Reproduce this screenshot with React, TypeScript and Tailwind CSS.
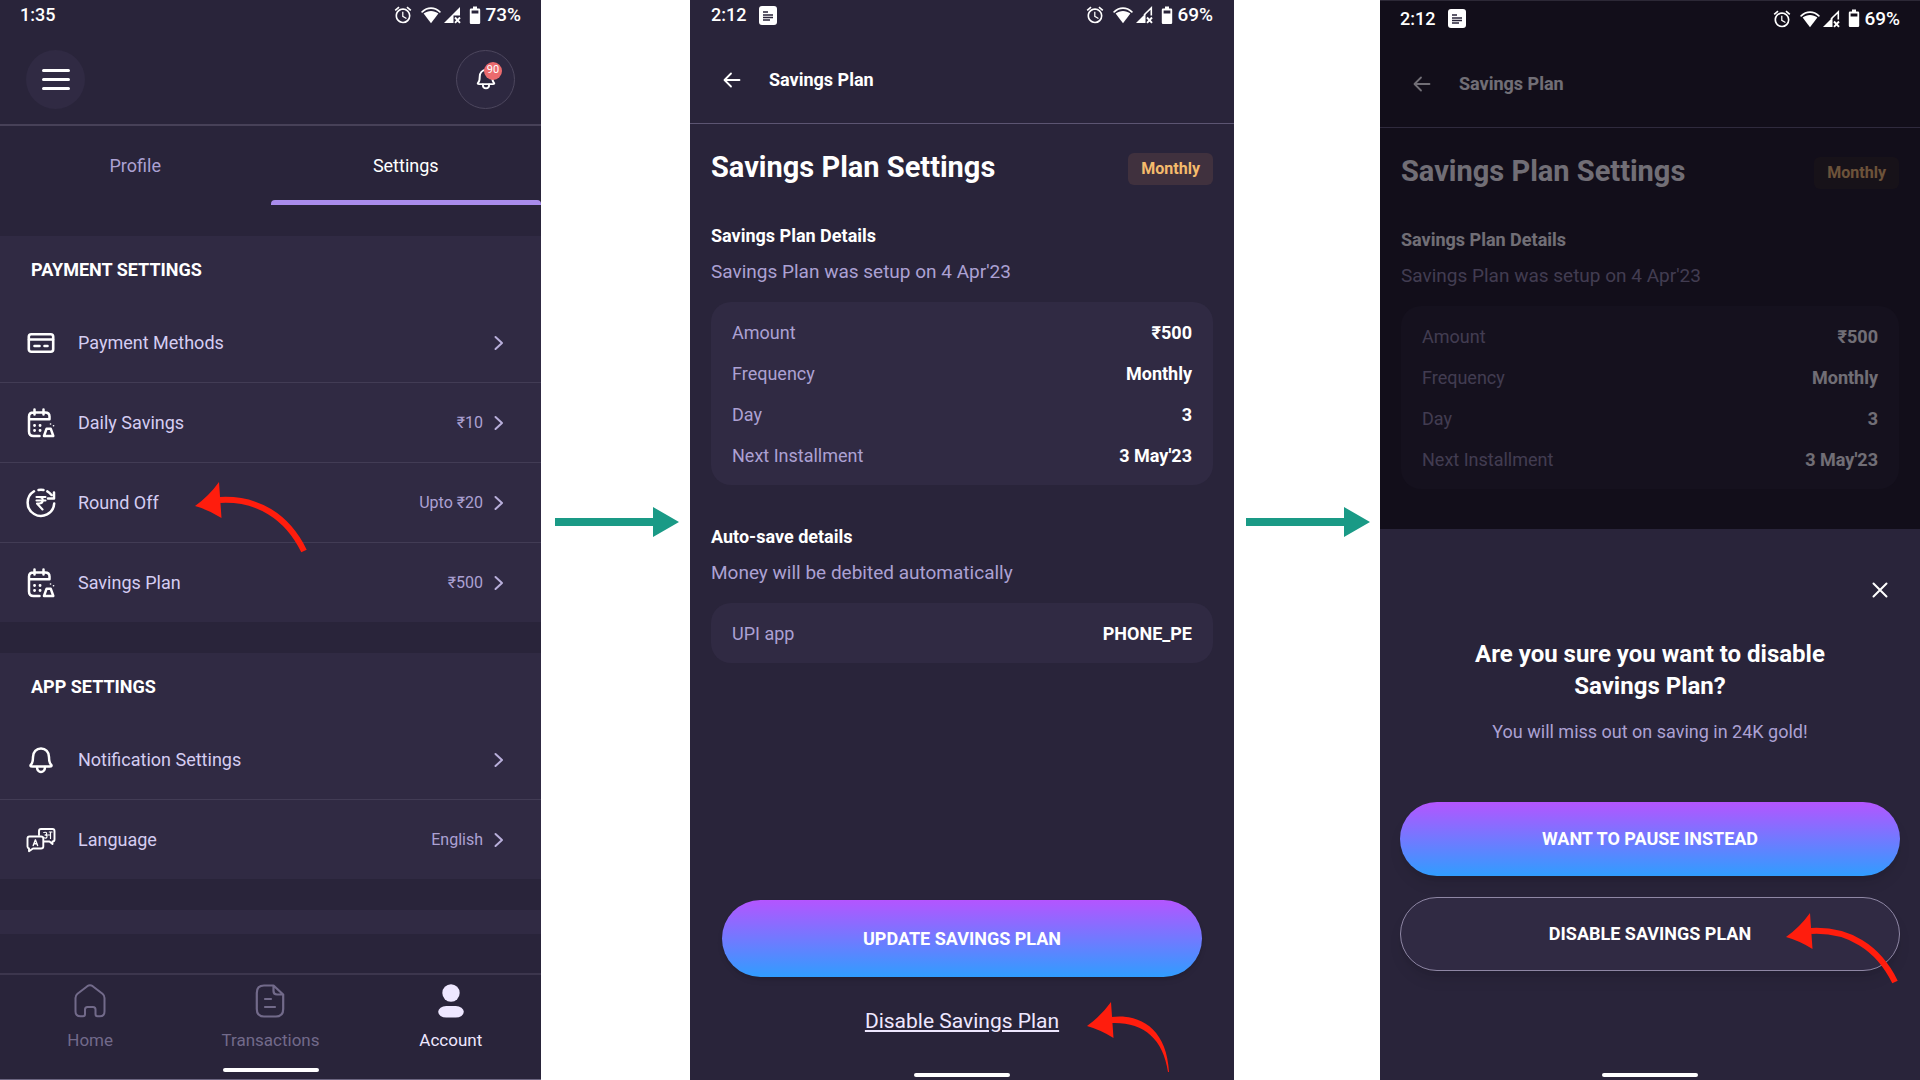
import React from "react";

type IconProps = { className?: string };

const stroke = {
  fill: "none",
  stroke: "currentColor",
  strokeLinecap: "round" as const,
  strokeLinejoin: "round" as const,
};

function AlarmIcon() {
  return (
    <svg viewBox="0 0 24 24" className="size-5" fill="currentColor" aria-hidden="true">
      <path d="M22 5.72l-4.6-3.86-1.29 1.53 4.6 3.86L22 5.72zM7.88 3.39L6.6 1.86 2 5.71l1.29 1.53 4.59-3.85zM12.5 8H11v6l4.75 2.85.75-1.23-4-2.37V8zM12 4c-4.97 0-9 4.03-9 9s4.02 9 9 9a9 9 0 0 0 0-18zm0 16c-3.87 0-7-3.13-7-7s3.13-7 7-7 7 3.13 7 7-3.13 7-7 7z" />
    </svg>
  );
}

function WifiIcon() {
  return (
    <svg viewBox="0 0 20 18" className="h-[18px] w-5" aria-hidden="true">
      <path d="M1.200 5.800C6.400 0.800 13.600 0.800 18.800 5.800" fill="none" stroke="currentColor" strokeWidth="1.800" strokeLinecap="round" />
      <path d="M2.600 7.600C7 4.200 13 4.200 17.400 7.600L10 17.200Z" fill="currentColor" />
    </svg>
  );
}

function SignalIcon({ full }: { full?: boolean }) {
  return (
    <svg viewBox="0 0 18 18" className="size-[18px]" aria-hidden="true">
      {full ? (
        <path d="M17 1V9.500H10.500V17H1Z" fill="currentColor" />
      ) : (
        <>
          <path d="M10.500 7.500V17H1Z" fill="currentColor" />
          <path d="M9 9L16.300 2V9.500" fill="none" stroke="currentColor" strokeWidth="1.600" />
        </>
      )}
      <path d="M12 11.500L17 16.800M17 11.500L12 16.800" stroke="currentColor" strokeWidth="1.900" />
    </svg>
  );
}

function BatteryIcon() {
  return (
    <svg viewBox="0 0 12 19" className="h-[19px] w-3" aria-hidden="true">
      <path fillRule="evenodd" d="M4 0.500H8V2.500H10Q11.200 2.500 11.200 3.700V16.800Q11.200 18 10 18H2Q0.800 18 0.800 16.800V3.700Q0.800 2.500 2 2.500H4ZM2.600 4.500V7.500H9.400V4.500Z" fill="currentColor" />
    </svg>
  );
}

function NoteIcon() {
  return (
    <svg viewBox="0 0 18 19" className="h-[19px] w-[18px]" aria-hidden="true">
      <rect width="18" height="19" rx="3" fill="#fff" />
      <path d="M4 6H9M4 9H14M4 11.500H14M4 14H11" stroke="#29243a" strokeWidth="1.300" />
    </svg>
  );
}

function StatusBar({ time, battery, note, fullSignal, className }: { time: string; battery: string; note?: boolean; fullSignal?: boolean; className: string }) {
  return (
    <div className={`flex items-center justify-between text-lg leading-5 font-medium text-white ${className}`}>
      <div className="flex items-center gap-[13px]">
        <span>{time}</span>
        {note && <NoteIcon />}
      </div>
      <div className="flex items-center">
        <AlarmIcon />
        <span className="ml-2 flex items-center gap-[2px]">
          <WifiIcon />
          <SignalIcon full={fullSignal} />
        </span>
        <span className="ml-2 flex items-center gap-1">
          <BatteryIcon />
          <span className="text-[19px] leading-5">{battery}</span>
        </span>
      </div>
    </div>
  );
}

function BellIcon({ className }: IconProps) {
  return (
    <svg viewBox="0 0 28 28" className={className} {...stroke} strokeWidth="2.500" aria-hidden="true">
      <path d="M5.500 20.500C3.200 20.500 3 19.500 4.200 18.300C5.800 16.700 6 14.500 6 11C6 6 9.300 2.500 14 2.500S22 6 22 11C22 14.500 22.200 16.700 23.800 18.300C25 19.500 24.800 20.500 22.500 20.500Z" />
      <path d="M10 21C10 27.500 18 27.500 18 21" />
    </svg>
  );
}

function CardIcon() {
  return (
    <svg viewBox="0 0 28 28" className="size-7" {...stroke} strokeWidth="2.600" aria-hidden="true">
      <rect x="1.800" y="5.200" width="24.400" height="17.600" rx="2.500" />
      <path d="M2 10.500H26M7.500 17H12.500M17.500 17H20.500" />
    </svg>
  );
}

function CalendarIcon() {
  return (
    <svg viewBox="0 0 28 30" className="h-[30px] w-7" {...stroke} strokeWidth="2.500" aria-hidden="true">
      <path d="M12.500 28H6.500Q2 28 2 23.500V8.500Q2 4.500 6.500 4.500H18Q22.500 4.500 22.500 8.500V11.300H2M7.500 1.500V6.500M16.500 1.500V6.500" />
      <path d="M7.500 17.500H7.600M13 17.500H13.100M7.500 22.500H7.600M13 22.500H13.100" strokeWidth="2.800" />
      <path d="M19.500 20.800H23.800L26.300 28H17Z" />
      <path d="M23.500 16H23.600M26.500 17.800H26.600" strokeWidth="1.600" />
    </svg>
  );
}

function RoundOffIcon() {
  return (
    <svg viewBox="0 0 30 30" className="h-[30px] w-[30px]" {...stroke} strokeWidth="2.500" aria-hidden="true">
      <path d="M8 3.300A13.300 13.300 0 1 0 28.200 15.500" />
      <path d="M12.500 1.900Q15 1.400 17.500 1.900M21.300 3.400Q23.500 4.600 25.500 7M28 4.500V10.500H22" />
      <path d="M10.500 9H19.500M10.500 12.500H19.500M10.500 9H13Q16.800 9 16.800 12.300Q16.800 15.500 13 15.500H11L16.500 21.500" strokeWidth="2.100" />
    </svg>
  );
}

function LanguageIcon() {
  return (
    <svg viewBox="0 0 30 26" className="h-[26px] w-[30px]" {...stroke} strokeWidth="1.900" aria-hidden="true">
      <path d="M13 8V4Q13 2 15 2H26.500Q28.500 2 28.500 4V12.500Q28.500 14.500 26.500 14.500V17L23.500 14.500H18" />
      <path d="M3.500 9.500H15Q17.300 9.500 17.300 11.500V19.500Q17.300 21.500 15 21.500H7L3 24.300V21.500Q1.500 21 1.500 19.500V11.500Q1.500 9.500 3.500 9.500Z" />
      <path d="M7.200 18.500L9.400 12.800L11.600 18.500M8 16.700H10.800" strokeWidth="1.400" />
      <path d="M17.800 5.500Q21 4.700 20.600 6.800Q20.300 8 19 8Q21.300 8.200 20.900 10Q20.300 11.800 18 10.700M21 8H24.500M23.300 5H26M24.500 5V11.500" strokeWidth="1.200" />
    </svg>
  );
}

function ChevronIcon() {
  return (
    <svg viewBox="0 0 10 16" className="h-4 w-[10px] text-[#b9afdb]" {...stroke} strokeWidth="2" aria-hidden="true">
      <path d="M1.500 2L8 8L1.500 14" />
    </svg>
  );
}

function HomeIcon() {
  return (
    <svg viewBox="0 0 32 34" className="h-[34px] w-8" {...stroke} strokeWidth="2" aria-hidden="true">
      <path d="M13.300 2.200Q16 0.500 18.700 2.200L28.500 9.800Q30.500 11.500 30.500 14V27.500Q30.500 32.300 26 32.300H23.500Q21.500 32.300 21.500 30V25.500Q21.500 23 19 23H13.500Q11 23 11 25.500V30Q11 32.300 9 32.300H6.500Q1.500 32.300 1.500 27.500V14Q1.500 11.500 3.500 9.800Z" />
    </svg>
  );
}

function TransactionsIcon() {
  return (
    <svg viewBox="0 0 30 34" className="h-[34px] w-[30px]" {...stroke} strokeWidth="2.200" aria-hidden="true">
      <path d="M18.500 1.500H9Q1.800 1.500 1.800 9V25Q1.800 32.500 9 32.500H21Q28.200 32.500 28.200 25V10.500ZM18.500 1.500V7Q18.500 10.500 22 10.500H28.200M10 15H16M10 23H20" />
    </svg>
  );
}

function AccountIcon() {
  return (
    <svg viewBox="0 0 30 34" className="h-[34px] w-[30px]" fill="currentColor" aria-hidden="true">
      <ellipse cx="15" cy="9" rx="8.700" ry="8.800" />
      <rect x="2.200" y="22" width="25.600" height="11.600" rx="8" ry="5.800" />
    </svg>
  );
}

function BackIcon() {
  return (
    <svg viewBox="0 0 18 16" className="h-4 w-[18px]" {...stroke} strokeWidth="1.800" aria-hidden="true">
      <path d="M16.500 8H2M8 1.500L1.500 8L8 14.500" />
    </svg>
  );
}

function RedArrow({ tapered, className }: { tapered?: boolean; className: string }) {
  return (
    <svg viewBox="0 0 112 72" className={`pointer-events-none absolute h-[72px] w-28 ${className}`} fill="#ff1d0d" aria-hidden="true">
      <path d="M0 24Q14 14 24 0L26.500 36Q14 28 0 24Z" />
      {tapered ? (
        <path d="M24 15C52 11 80 26 82 70L81 70C76 36 56 20 25 21Z" />
      ) : (
        <path d="M25 18C62 16 92 34 109 69" fill="none" stroke="#ff1d0d" strokeWidth="6" />
      )}
    </svg>
  );
}

function StepArrow() {
  return (
    <div className="flex flex-col items-center justify-center pb-9 pl-[2px]">
      <svg viewBox="0 0 124 30" className="h-[30px] w-[124px]" fill="#1a9a86" aria-hidden="true">
        <path d="M0 11H98V0L124 15L98 30V19H0Z" />
      </svg>
    </div>
  );
}

function HomeBar() {
  return <div className="mx-auto h-1 w-24 rounded-full bg-white" />;
}

function SettingRow({ icon, label, value }: { icon: React.ReactNode; label: string; value?: string }) {
  return (
    <li className="border-b border-[#423c55] last:border-b-0">
      <button type="button" className="flex h-[79px] w-full items-center pr-[37px] pl-[26px] text-left">
        <span className="flex w-[30px] justify-center text-white">{icon}</span>
        <span className="ml-[22px] flex-1 text-lg text-[#d5cdf2]">{label}</span>
        {value && <span className="mr-[11px] text-base text-[#aca1d3]">{value}</span>}
        <ChevronIcon />
      </button>
    </li>
  );
}

function SettingSection({ title, children }: { title: string; children: React.ReactNode }) {
  return (
    <section className="bg-[#302a43]">
      <h2 className="flex h-[67px] items-center px-[31px] text-lg font-bold text-white">{title}</h2>
      <ul>{children}</ul>
    </section>
  );
}

function NavItem({ icon, label, active }: { icon: React.ReactNode; label: string; active?: boolean }) {
  return (
    <a href="#" className={`flex flex-col items-center gap-[10px] text-[17px] leading-6 ${active ? "text-[#eee7ff]" : "text-[#726a8a]"}`}>
      {icon}
      <span>{label}</span>
    </a>
  );
}

function AccountScreen() {
  return (
    <main className="relative flex min-w-0 flex-col border-b border-[#6b6580] bg-[#29243a]">
      <StatusBar time="1:35" battery="73%" fullSignal className="h-8 px-5 pb-[2px]" />
      <header className="flex h-[94px] items-center justify-between border-b-2 border-[#474158] px-[26px] pt-[2px]">
        <button type="button" aria-label="Menu" className="flex size-[59px] items-center justify-center rounded-full bg-[#302a43]">
          <span className="flex flex-col gap-[6px]">
            <span className="h-[3px] w-7 rounded-full bg-white" />
            <span className="h-[3px] w-7 rounded-full bg-white" />
            <span className="h-[3px] w-7 rounded-full bg-white" />
          </span>
        </button>
        <button type="button" aria-label="Notifications" className="relative flex size-[59px] items-center justify-center rounded-full border border-[#4d475e] bg-[#2d2840] text-white">
          <BellIcon className="size-[22px]" />
          <span className="absolute top-[11px] right-3 flex size-[18px] items-center justify-center rounded-full bg-[#eb6b6e] text-[11px] text-white">90</span>
        </button>
      </header>
      <nav className="grid h-[79px] grid-cols-2 text-lg" aria-label="Account sections">
        <a href="#" className="flex items-center justify-center text-[#aca1d3]">Profile</a>
        <a href="#" className="relative flex items-center justify-center text-white">
          Settings
          <span className="absolute inset-x-0 bottom-0 h-[5px] rounded-t bg-[#a98cec]" />
        </a>
      </nav>
      <div className="flex flex-col gap-[31px] pt-[31px]">
        <SettingSection title="PAYMENT SETTINGS">
          <SettingRow icon={<CardIcon />} label="Payment Methods" />
          <SettingRow icon={<CalendarIcon />} label="Daily Savings" value="₹10" />
          <SettingRow icon={<RoundOffIcon />} label="Round Off" value="Upto ₹20" />
          <SettingRow icon={<CalendarIcon />} label="Savings Plan" value="₹500" />
        </SettingSection>
        <SettingSection title="APP SETTINGS">
          <SettingRow icon={<BellIcon className="size-7" />} label="Notification Settings" />
          <SettingRow icon={<LanguageIcon />} label="Language" value="English" />
        </SettingSection>
        <div className="h-6 bg-[#302a43]" />
      </div>
      <footer className="mt-auto border-t-2 border-[#3c364d] pb-[7px]">
        <nav className="grid grid-cols-3 pt-[9px]" aria-label="Main">
          <NavItem icon={<HomeIcon />} label="Home" />
          <NavItem icon={<TransactionsIcon />} label="Transactions" />
          <NavItem icon={<AccountIcon />} label="Account" active />
        </nav>
        <div className="pt-4">
          <HomeBar />
        </div>
      </footer>
      <RedArrow className="top-[482px] left-[195px]" />
    </main>
  );
}

const planDetails = [
  ["Amount", "₹500"],
  ["Frequency", "Monthly"],
  ["Day", "3"],
  ["Next Installment", "3 May'23"],
];

function DetailCard({ rows, dimmed }: { rows: string[][]; dimmed?: boolean }) {
  return (
    <dl className={`mt-4 rounded-[20px] px-[21px] pt-[10px] pb-[9px] ${dimmed ? "bg-[#1a1624]" : "bg-[#302a43]"}`}>
      {rows.map(([name, value]) => (
        <div key={name} className="flex h-[41px] items-center justify-between text-lg">
          <dt className={dimmed ? "text-[#8a82a4]" : "text-[#aca1d3]"}>{name}</dt>
          <dd className="font-bold text-white">{value}</dd>
        </div>
      ))}
    </dl>
  );
}

function PlanHeader() {
  return (
    <header className="flex h-[92px] items-center border-b border-[#5c5572] pt-1 pl-[33px] text-white">
      <button type="button" aria-label="Back">
        <BackIcon />
      </button>
      <h1 className="ml-7 text-lg font-bold">Savings Plan</h1>
    </header>
  );
}

function PlanSummary({ dimmed }: { dimmed?: boolean }) {
  return (
    <>
      <div className="flex items-center justify-between pt-[25px]">
        <h2 className="text-[29px] leading-8 font-bold text-white">Savings Plan Settings</h2>
        <span className={`mt-1 rounded-md px-[13px] py-1 text-base font-bold text-[#f4bb6c] ${dimmed ? "bg-[#201818]" : "bg-[#40313e]"}`}>Monthly</span>
      </div>
      <h3 className="mt-[37px] text-lg leading-7 font-bold text-white">Savings Plan Details</h3>
      <p className={`mt-2 text-[19px] leading-7 ${dimmed ? "text-[#8a82a4]" : "text-[#aca1d3]"}`}>Savings Plan was setup on 4 Apr'23</p>
      <DetailCard rows={planDetails} dimmed={dimmed} />
    </>
  );
}

function SavingsPlanScreen() {
  return (
    <main className="relative flex min-w-0 flex-col bg-[#29243a]">
      <StatusBar time="2:12" battery="69%" note className="h-8 px-[21px] pb-[2px]" />
      <PlanHeader />
      <div className="px-[21px]">
        <PlanSummary />
        <h3 className="mt-[38px] text-lg leading-7 font-bold text-white">Auto-save details</h3>
        <p className="mt-2 text-[19px] leading-7 text-[#aca1d3]">Money will be debited automatically</p>
        <DetailCard rows={[["UPI app", "PHONE_PE"]]} />
      </div>
      <footer className="mt-auto flex flex-col items-center px-8 pb-[3px]">
        <button type="button" className="h-[77px] w-full rounded-full bg-linear-to-b/srgb from-[#b455ff] to-[#309dff] text-lg font-bold text-white shadow-md">
          UPDATE SAVINGS PLAN
        </button>
        <a href="#" className="mt-[29px] mb-[37px] text-[21px] leading-[30px] text-[#eee7ff] underline underline-offset-2">Disable Savings Plan</a>
        <HomeBar />
      </footer>
      <RedArrow tapered className="right-[35px] bottom-[6px]" />
    </main>
  );
}

function DisableDialogScreen() {
  return (
    <main className="relative flex min-w-0 flex-col border-t border-[#2c2836] bg-[#120e1a]">
      <StatusBar time="2:12" battery="69%" note className="h-[35px] px-5" />
      <div className="opacity-40" aria-hidden="true">
        <PlanHeader />
      </div>
      <div className="px-[21px] pb-10 opacity-40" aria-hidden="true">
        <PlanSummary dimmed />
      </div>
      <section role="dialog" aria-labelledby="disable-title" className="flex flex-1 flex-col bg-[#29243a] px-5 text-center">
        <button type="button" aria-label="Close" className="mt-[53px] mr-3 self-end text-white">
          <svg viewBox="0 0 16 16" className="size-4" {...stroke} strokeWidth="2" aria-hidden="true">
            <path d="M1.500 1.500L14.500 14.500M14.500 1.500L1.500 14.500" />
          </svg>
        </button>
        <h2 id="disable-title" className="mx-auto mt-10 max-w-[360px] text-2xl font-bold text-white">
          Are you sure you want to disable Savings Plan?
        </h2>
        <p className="mt-4 text-lg leading-7 text-[#aca1d3]">You will miss out on saving in 24K gold!</p>
        <button type="button" className="mt-14 h-[74px] rounded-full bg-linear-to-b/srgb from-[#b455ff] to-[#309dff] text-lg font-bold text-white shadow-lg">
          WANT TO PAUSE INSTEAD
        </button>
        <button type="button" className="mt-[21px] h-[74px] rounded-full border border-[#8f87a5] bg-[#302a43] text-lg font-bold text-white shadow-lg">
          DISABLE SAVINGS PLAN
        </button>
        <div className="mt-auto pb-[3px]">
          <HomeBar />
        </div>
      </section>
      <RedArrow className="right-[22px] bottom-[95px]" />
    </main>
  );
}

export default function App() {
  return (
    <div className="grid min-h-screen grid-cols-[541fr_149fr_544fr_146fr_540fr] bg-white font-[Roboto,sans-serif]">
      <AccountScreen />
      <StepArrow />
      <SavingsPlanScreen />
      <StepArrow />
      <DisableDialogScreen />
    </div>
  );
}
